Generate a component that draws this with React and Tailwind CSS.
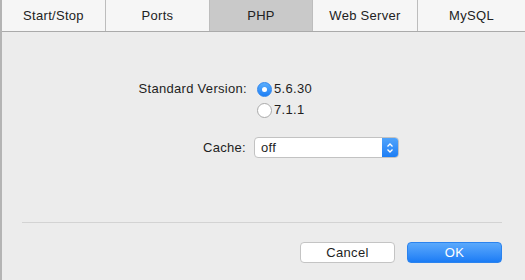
import React, { useState } from "react";

const tabs = ["Start/Stop", "Ports", "PHP", "Web Server", "MySQL"];

const Radio = ({ checked, label, onClick }) => (
  <div className="flex items-center h-[20px] cursor-default" onClick={onClick}>
    {checked ? (
      <div className="w-[15px] h-[15px] rounded-full bg-gradient-to-b from-[#5aaefc] to-[#1b7ef5] border border-[#2f86ee] flex items-center justify-center">
        <div className="w-[5px] h-[5px] rounded-full bg-white" />
      </div>
    ) : (
      <div className="w-[15px] h-[15px] rounded-full bg-white border border-[#a9a9a9]" />
    )}
    <span className="ml-[2px] text-[13px] text-[#1e1e1e]">{label}</span>
  </div>
);

const App = () => {
  const [active, setActive] = useState("PHP");
  const [version, setVersion] = useState("5.6.30");

  return (
    <div
      className="w-[525px] h-[280px] bg-[#ececec] border-l-2 border-[#b4b4b4] flex flex-col overflow-hidden tracking-[0.3px]"
      style={{ fontFamily: '"Liberation Sans", Arial, sans-serif' }}
    >
      {/* tab bar */}
      <div className="grid grid-cols-[104px_104px_103px_105px_1fr] h-[32px] border-b border-[#aaaaaa]">
        {tabs.map((t, i) => (
          <div
            key={t}
            onClick={() => setActive(t)}
            className={
              "flex items-center justify-center text-[13px] text-[#222] " +
              (i < tabs.length - 1 ? "border-r border-[#bdbdbd] " : "") +
              (active === t ? "bg-[#c9c9c9]" : "bg-[#f6f6f6]")
            }
          >
            {t}
          </div>
        ))}
      </div>

      {/* standard version */}
      <div className="flex mt-[47px]">
        <div className="w-[245px] h-[20px] flex items-center justify-end text-[13px] text-[#1e1e1e]">
          Standard Version:
        </div>
        <div className="ml-[10px] flex flex-col gap-[1px]">
          <Radio checked={version === "5.6.30"} label="5.6.30" onClick={() => setVersion("5.6.30")} />
          <Radio checked={version === "7.1.1"} label="7.1.1" onClick={() => setVersion("7.1.1")} />
        </div>
      </div>

      {/* cache */}
      <div className="flex items-center mt-[17px]">
        <div className="w-[244px] text-right text-[13px] text-[#1e1e1e]">Cache:</div>
        <div className="ml-[8px] w-[145px] h-[21px] flex bg-white border border-[#c2c2c2] rounded-[4px] overflow-hidden">
          <div className="flex-1 flex items-center pl-[6px] text-[13px] text-[#1e1e1e]">off</div>
          <div className="w-[16px] bg-gradient-to-b from-[#4fa3fb] to-[#1c7ef5] flex items-center justify-center">
            <svg width="8" height="12" viewBox="0 0 8 12" fill="none" stroke="white" strokeWidth="1.3">
              <path d="M1.5 4.5 L4 2 L6.5 4.5" />
              <path d="M1.5 7.5 L4 10 L6.5 7.5" />
            </svg>
          </div>
        </div>
      </div>

      {/* separator */}
      <div className="mt-[64px] ml-[20px] w-[480px] h-px bg-[#d3d3d3]" />

      {/* buttons */}
      <div className="flex mt-[19px] ml-[298px] gap-[12px]">
        <button className="w-[95px] h-[21px] bg-white border border-[#c4c4c4] rounded-[4px] text-[13px] text-[#1e1e1e] flex items-center justify-center">
          Cancel
        </button>
        <button className="w-[95px] h-[21px] bg-gradient-to-b from-[#5aa9fc] to-[#1a7cf5] border border-[#2b83ee] rounded-[4px] text-[13px] text-white flex items-center justify-center">
          OK
        </button>
      </div>
    </div>
  );
};

export default App;
